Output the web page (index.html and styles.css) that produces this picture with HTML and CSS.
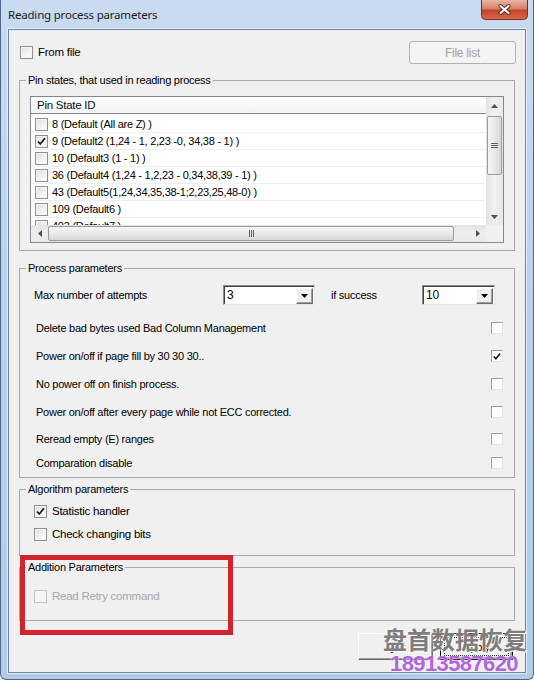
FILE: index.html
```html
<!DOCTYPE html>
<html>
<head>
<meta charset="utf-8">
<title>Reading process parameters</title>
<link rel="stylesheet" href="styles.css">
</head>
<body>
<div class="window">
  <div class="titlebar">
    <span class="title">Reading process parameters</span>
    <div class="close">
      <svg width="47" height="20" viewBox="0 0 47 20">
        <defs>
          <linearGradient id="cg" x1="0" y1="0" x2="0" y2="1">
            <stop offset="0" stop-color="#eab3a6"/>
            <stop offset="0.45" stop-color="#d6806d"/>
            <stop offset="0.52" stop-color="#c2432c"/>
            <stop offset="1" stop-color="#dc6c4e"/>
          </linearGradient>
        </defs>
        <path d="M0.5 0 V15.5 Q0.5 19.5 4.5 19.5 H42.5 Q46.5 19.5 46.5 15.5 V0" fill="url(#cg)" stroke="#72301f"/>
        <path d="M19.5 6 L27.5 13 M27.5 6 L19.5 13" stroke="#5a2418" stroke-width="4" stroke-linecap="round"/>
        <path d="M19.5 6 L27.5 13 M27.5 6 L19.5 13" stroke="#ffffff" stroke-width="2.2" stroke-linecap="round"/>
      </svg>
    </div>
  </div>

  <div class="client">
    <div class="top-row">
      <div class="chk-line">
        <span class="box"></span>
        <span class="chk-text">From file</span>
      </div>
      <div class="btn btn-disabled btn-filelist">File list</div>
    </div>

    <fieldset class="group g1">
      <legend>Pin states, that used in reading process</legend>
      <div class="g1-body">
        <div class="list">
          <div class="list-body">
            <div class="list-header">Pin State ID</div>
            <div class="list-rows">
              <div class="lrow"><span class="box"></span><span>8 (Default (All are Z) )</span></div>
              <div class="lrow"><span class="box checked"><svg width="11" height="11" viewBox="0 0 11 11"><path d="M2 5.5 L4.3 8 L9 2.3" fill="none" stroke="#1b1b1b" stroke-width="1.8"/></svg></span><span>9 (Default2 (1,24 - 1, 2,23 -0, 34,38 - 1) )</span></div>
              <div class="lrow"><span class="box"></span><span>10 (Default3 (1 - 1) )</span></div>
              <div class="lrow"><span class="box"></span><span>36 (Default4 (1,24 - 1,2,23 - 0,34,38,39 - 1) )</span></div>
              <div class="lrow"><span class="box"></span><span>43 (Default5(1,24,34,35,38-1;2,23,25,48-0) )</span></div>
              <div class="lrow"><span class="box"></span><span>109 (Default6 )</span></div>
              <div class="lrow"><span class="box"></span><span>403 (Default7 )</span></div>
            </div>
          </div>
          <div class="vscroll">
            <div class="sb-btn"><svg width="7" height="4" viewBox="0 0 7 4"><path d="M0 4 L3.5 0 L7 4Z" fill="#4f4f4f"/></svg></div>
            <div class="vthumb"><span class="grip"></span></div>
            <div class="sb-fill"></div>
            <div class="sb-btn"><svg width="7" height="4" viewBox="0 0 7 4"><path d="M0 0 L3.5 4 L7 0Z" fill="#4f4f4f"/></svg></div>
          </div>
          <div class="hscroll">
            <div class="sb-btn"><svg width="4" height="7" viewBox="0 0 4 7"><path d="M4 0 L0 3.5 L4 7Z" fill="#4f4f4f"/></svg></div>
            <div class="hthumb"><span class="hgrip"></span></div>
            <div class="sb-fill"></div>
            <div class="sb-btn"><svg width="4" height="7" viewBox="0 0 4 7"><path d="M0 0 L4 3.5 L0 7Z" fill="#4f4f4f"/></svg></div>
          </div>
          <div class="corner"></div>
        </div>
      </div>
    </fieldset>

    <fieldset class="group g2">
      <legend>Process parameters</legend>
      <div class="g2-body">
        <div class="combo-row">
          <span class="combo-label">Max number of attempts</span>
          <div class="combo combo1"><span class="combo-val">3</span><span class="combo-btn"><svg width="7" height="4" viewBox="0 0 7 4"><path d="M0 0 L3.5 4 L7 0Z" fill="#000"/></svg></span></div>
          <span class="combo-label2">if success</span>
          <div class="combo combo2"><span class="combo-val">10</span><span class="combo-btn"><svg width="7" height="4" viewBox="0 0 7 4"><path d="M0 0 L3.5 4 L7 0Z" fill="#000"/></svg></span></div>
        </div>
        <div class="prow r1"><span>Delete bad bytes used Bad Column Management</span><span class="box flat"></span></div>
        <div class="prow r2"><span>Power on/off if page fill by 30 30 30..</span><span class="box flat"><svg width="11" height="11" viewBox="0 0 11 11"><path d="M2 5.5 L4.3 8 L9 2.3" fill="none" stroke="#1b1b1b" stroke-width="1.8"/></svg></span></div>
        <div class="prow r3"><span>No power off on finish process.</span><span class="box flat"></span></div>
        <div class="prow r4"><span>Power on/off after every page while not ECC corrected.</span><span class="box flat"></span></div>
        <div class="prow r5"><span>Reread empty (E) ranges</span><span class="box flat"></span></div>
        <div class="prow r6"><span>Comparation disable</span><span class="box flat"></span></div>
      </div>
    </fieldset>

    <fieldset class="group g3">
      <legend>Algorithm parameters</legend>
      <div class="g3-body">
        <div class="arow"><span class="box"><svg width="11" height="11" viewBox="0 0 11 11"><path d="M2 5.5 L4.3 8 L9 2.3" fill="none" stroke="#1b1b1b" stroke-width="1.8"/></svg></span><span class="atext">Statistic handler</span></div>
        <div class="arow a2"><span class="box"></span><span class="atext">Check changing bits</span></div>
      </div>
    </fieldset>

    <fieldset class="group g4">
      <legend>Addition Parameters</legend>
      <div class="g4-body">
        <div class="arow disabled"><span class="box box-disabled"></span><span class="atext">Read Retry command</span></div>
      </div>
    </fieldset>

    <div class="btn-row">
      <div class="btn btn-classic btn-quit">Quit</div>
      <div class="btn btn-classic btn-default"><span class="focus">Apply</span></div>
    </div>
  </div>

  <div class="annotation"></div>
  <div class="wm-cn">盘首数据恢复</div>
  <div class="wm-num">18913587620</div>
</div>
</body>
</html>
```

FILE: styles.css
```css
html, body {
  margin: 0;
  padding: 0;
  background: #ffffff;
}

.window {
  position: relative;
  width: 534px;
  height: 680px;
  box-sizing: border-box;
  overflow: hidden;
  display: flex;
  flex-direction: column;
  background: linear-gradient(180deg, #c8dbf0 0%, #bcd2ec 40%, #b3cbe7 100%);
  border-left: 1px solid #4a6888;
  border-right: 1px solid #4a6888;
  border-bottom: 1px solid #4a6888;
  border-radius: 0 0 6px 6px;
  font-family: "Liberation Sans", Arial, sans-serif;
  font-size: 11px;
  color: #000;
}

.titlebar {
  height: 29px;
  display: flex;
  align-items: flex-start;
  padding: 0 5px 0 7px;
}

.title {
  font-family: "Noto Sans", "Open Sans", sans-serif;
  font-size: 11.5px;
  letter-spacing: -0.2px;
  line-height: 30px;
  color: #1a1a1a;
  flex: 1;
}

.close {
  width: 47px;
  height: 20px;
}
.close svg {
  display: block;
}

.client {
  margin: 0 7px;
  height: 644px;
  box-sizing: border-box;
  background: #f0f0f0;
  border: 1px solid #6a84a2;
  box-shadow: 0 0 0 1px rgba(255, 255, 255, 0.6);
  display: flex;
  flex-direction: column;
  letter-spacing: -0.25px;
}

/* top row */
.top-row {
  margin-top: 11px;
  height: 23px;
  padding: 0 9px 0 11px;
  display: flex;
  align-items: center;
  justify-content: space-between;
}

.chk-line {
  display: flex;
  align-items: center;
  gap: 5px;
}

.chk-text {
  line-height: 13px;
  font-size: 11.5px;
}

/* checkboxes */
.box {
  width: 13px;
  height: 13px;
  box-sizing: border-box;
  border: 1px solid #8e8f8f;
  background: linear-gradient(135deg, #dcdcdc 0%, #f4f4f4 60%, #ffffff 100%);
  box-shadow: inset 0 0 0 1px #f6f6f6;
  display: flex;
  align-items: center;
  justify-content: center;
  flex: none;
}
.box svg {
  display: block;
}
.box.flat {
  width: 12px;
  height: 12px;
  border-color: #9c9c9c #e2e2e2 #e2e2e2 #9c9c9c;
  background: #ffffff;
  box-shadow: none;
}
.box.box-disabled {
  border-color: #c2c2c2;
  background: #f4f4f4;
  box-shadow: none;
}

/* buttons */
.btn {
  box-sizing: border-box;
  display: flex;
  align-items: center;
  justify-content: center;
  font-size: 11px;
}
.btn-disabled {
  border: 1px solid #adb2b5;
  border-radius: 3px;
  background: #f4f4f4;
  color: #a3a3a3;
}
.btn-filelist {
  width: 107px;
  height: 23px;
  font-size: 12px;
}

/* group boxes */
.group {
  margin: 0 10px;
  padding: 0;
  min-width: 0;
  border: 1px solid #a9a9a9;
  box-sizing: border-box;
}
.group legend {
  margin-left: 6px;
  padding: 0 2px;
  font-size: 11px;
  line-height: 13px;
}

.g1 { margin-top: 10px; }
.g1-body { padding: 9px 10px 7px 10px; }

/* list view */
.list {
  width: 474px;
  height: 147px;
  box-sizing: border-box;
  border: 1px solid #828790;
  background: #ffffff;
  display: grid;
  grid-template-columns: 1fr 17px;
  grid-template-rows: 1fr 17px;
}
.list-body {
  overflow: hidden;
}
.list-header {
  height: 17px;
  box-sizing: border-box;
  border-bottom: 1px solid #8a8a8a;
  background: linear-gradient(180deg, #ffffff 0%, #f3f3f3 100%);
  padding-left: 6px;
  line-height: 16px;
  font-size: 11.5px;
  color: #111;
}
.list-rows {
  margin-top: 2px;
}
.lrow {
  height: 17px;
  box-sizing: border-box;
  border-bottom: 1px solid #efefef;
  display: flex;
  align-items: center;
  padding-left: 4px;
  gap: 4px;
  font-size: 11px;
  white-space: nowrap;
}

.vscroll {
  display: flex;
  flex-direction: column;
  background: linear-gradient(90deg, #e3e3e3 0%, #f0f0f0 50%, #e8e8e8 100%);
}
.sb-btn {
  width: 17px;
  height: 17px;
  flex: none;
  display: flex;
  align-items: center;
  justify-content: center;
}
.sb-btn svg { display: block; }
.sb-fill { flex: 1; }
.vthumb {
  margin: 2px 1px 0 1px;
  height: 59px;
  box-sizing: border-box;
  border: 1px solid #9b9b9b;
  border-radius: 2px;
  background: linear-gradient(90deg, #f6f6f6 0%, #e9e9e9 50%, #d7d7d7 100%);
  display: flex;
  align-items: center;
  justify-content: center;
  flex: none;
}
.grip {
  width: 7px;
  height: 5px;
  background: repeating-linear-gradient(180deg, #5e5e5e 0 1px, transparent 1px 2px);
}
.hscroll {
  display: flex;
  background: linear-gradient(180deg, #e3e3e3 0%, #f0f0f0 50%, #e8e8e8 100%);
}
.hthumb {
  margin: 1px 0;
  width: 406px;
  box-sizing: border-box;
  border: 1px solid #9b9b9b;
  border-radius: 2px;
  background: linear-gradient(180deg, #f6f6f6 0%, #e9e9e9 50%, #d7d7d7 100%);
  display: flex;
  align-items: center;
  justify-content: center;
  flex: none;
}
.hgrip {
  width: 5px;
  height: 7px;
  background: repeating-linear-gradient(90deg, #5e5e5e 0 1px, transparent 1px 2px);
}
.corner {
  background: #f0f0f0;
}

/* process parameters */
.g2 { margin-top: 11px; }
.g2-body { padding: 10px 11px 6px 14px; }
.combo-row {
  height: 20px;
  display: flex;
  align-items: center;
}
.combo-label {
  width: 189px;
  flex: none;
}
.combo-label2 {
  width: 91px;
  margin-left: 16px;
  flex: none;
}
.combo {
  height: 20px;
  box-sizing: border-box;
  background: #ffffff;
  border: 1px solid;
  border-color: #8a8a8a #e8e8e8 #e8e8e8 #8a8a8a;
  box-shadow: inset 1px 1px 0 #404040;
  display: flex;
  align-items: center;
  justify-content: space-between;
  flex: none;
}
.combo1 { width: 92px; }
.combo2 { width: 73px; }
.combo-val {
  padding-left: 3px;
  font-size: 12px;
}
.combo-btn {
  width: 17px;
  height: 16px;
  margin-right: 1px;
  margin-top: 1px;
  box-sizing: border-box;
  background: #f0f0f0;
  border: 1px solid;
  border-color: #ffffff #6b6b6b #6b6b6b #ffffff;
  box-shadow: inset -1px -1px 0 #a0a0a0;
  display: flex;
  align-items: center;
  justify-content: center;
}
.combo-btn svg { display: block; }

.prow {
  height: 16px;
  display: flex;
  align-items: center;
  justify-content: space-between;
  padding-left: 2px;
}
.r1 { margin-top: 15px; }
.r2 { margin-top: 12px; }
.r3 { margin-top: 12px; }
.r4 { margin-top: 12px; }
.r5 { margin-top: 11px; }
.r6 { margin-top: 8px; }

/* algorithm parameters */
.g3 { margin-top: 5px; }
.g3-body { padding: 7px 10px 13px 14px; }
.arow {
  height: 16px;
  display: flex;
  align-items: center;
  gap: 5px;
  font-size: 11.5px;
}
.a2 { margin-top: 7px; }
.arow.disabled { color: #a6a6a6; }

.g4 { margin-top: 5px; }
.g4-body { padding: 14px 10px 16px 14px; }

/* bottom buttons */
.btn-row {
  margin-top: 12px;
  height: 27px;
  padding-right: 12px;
  display: flex;
  justify-content: flex-end;
  gap: 7px;
}
.btn-classic {
  background: #f0f0f0;
  border: 1px solid;
  border-color: #ffffff #696969 #696969 #ffffff;
  box-shadow: inset -1px -1px 0 #a0a0a0;
  font-size: 11px;
}
.btn-quit { width: 75px; }
.btn-default {
  width: 73px;
  border: 1px solid #000;
  box-shadow: inset 1px 1px 0 #ffffff, inset -2px -2px 0 #a0a0a0;
  padding: 3px;
}
.focus {
  flex: 1;
  align-self: stretch;
  border: 1px dotted #222;
  display: flex;
  align-items: center;
  justify-content: center;
}

/* overlays */
.annotation {
  position: absolute;
  left: 19px;
  top: 555px;
  width: 213px;
  height: 80px;
  box-sizing: border-box;
  border: 5px solid #d2232e;
}

.wm-cn {
  position: absolute;
  left: 382px;
  top: 626px;
  font-family: "Noto Sans CJK SC", sans-serif;
  font-size: 24px;
  font-weight: 700;
  line-height: 26px;
  color: #7d7d7d;
  letter-spacing: 0px;
  text-shadow: 0 0 2px #ffffff, 1px 1px 0 #ffffff;
  white-space: nowrap;
}

.wm-num {
  position: absolute;
  left: 389px;
  top: 652px;
  font-family: "Liberation Sans", Arial, sans-serif;
  font-size: 22px;
  font-weight: 700;
  line-height: 24px;
  letter-spacing: -0.6px;
  color: #b266dc;
  text-shadow: 0 0 2px #ffffff;
  white-space: nowrap;
}
```
